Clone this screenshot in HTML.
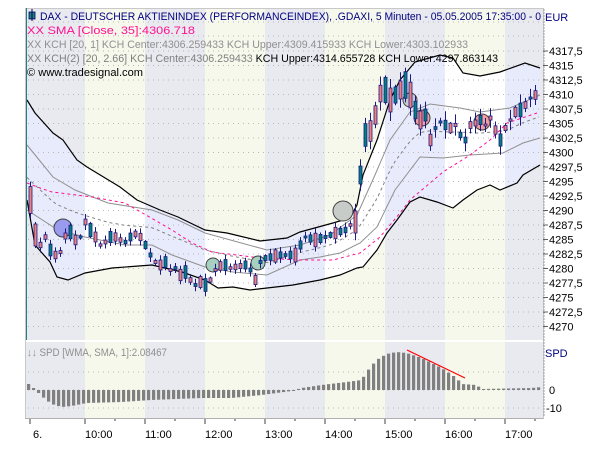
<!DOCTYPE html>
<html><head><meta charset="utf-8"><style>
body{margin:0;background:#fff;width:600px;height:450px;overflow:hidden;font-family:"Liberation Sans",sans-serif}
svg{position:absolute;left:0;top:0}
text{font-family:"Liberation Sans",sans-serif;font-size:11px}
</style></head><body>
<svg id="s" width="600" height="450" xmlns="http://www.w3.org/2000/svg"></svg>
<script>
var s=document.getElementById('s'),h='';
function interp(pts,x){if(x<=pts[0][0])return pts[0][1];for(var i=0;i<pts.length-1;i++){if(x<=pts[i+1][0]){var a=pts[i],b=pts[i+1];var t=(x-a[0])/(b[0]-a[0]);return a[1]+t*(b[1]-a[1]);}}return pts[pts.length-1][1];}
function pts2(p){return p.map(function(q){return q[0]+','+q[1]}).join(' ');}
function pl(p,st){return '<polyline fill="none" points="'+pts2(p)+'" '+st+'/>';}
var up=[[27,100],[35,113],[53,133],[63,140],[77,160],[87,167],[120,187],[137,200],[160,210],[178,217],[205,230],[227,233],[260,241],[287,238],[300,232],[333,223],[350,218],[357,205],[363,175],[377,140],[390,100],[400,80],[415,62],[440,55],[453,58],[463,73],[480,76],[500,72],[525,63],[540,68]];
var lo=[[27,200],[35,245],[50,262],[57,277],[68,280],[85,273],[112,268],[152,265],[182,272],[205,280],[218,288],[233,287],[250,290],[267,288],[293,285],[320,280],[340,275],[357,268],[363,267],[377,250],[387,233],[397,220],[410,202],[420,197],[437,202],[453,208],[463,200],[477,190],[490,185],[500,190],[517,183],[523,175],[540,165]];
var ui=[[27,145],[53,177],[75,190],[108,203],[152,210],[178,220],[205,233],[267,250],[300,245],[330,235],[357,215],[375,175],[390,140],[410,112],[430,104],[460,108],[480,112],[510,108],[540,95]];
var li=[[27,210],[58,230],[85,237],[125,245],[152,245],[172,255],[205,267],[233,272],[267,275],[300,260],[320,257],[340,253],[360,243],[377,227],[395,190],[420,157],[443,158],[470,155],[503,153],[523,143],[540,138]];
var sma=[[27,183],[40,188],[52,192],[92,197],[125,203],[172,230],[192,243],[212,252],[260,258],[300,260],[333,260],[360,253],[380,237],[400,213],[410,200],[443,172],[470,155],[490,140],[507,123],[537,113]];
var ce=[];for(var x=27;x<=540;x+=4)ce.push([x,(interp(ui,x)+interp(li,x))/2]);
h+='<defs><clipPath id="ch"><polygon points="'+pts2(up.concat(lo.slice().reverse()))+'"/></clipPath></defs>';
var cols=['#e9e9f0','#f6f8ec'],cc=['#e8ebfb','#ffffff'];
for(var i=0;i<9;i++){var x0=i==0?25:25+i*60;var x1=25+(i+1)*60;if(x1>543)x1=543;
h+='<rect x="'+x0+'" y="8" width="'+(x1-x0)+'" height="410" fill="'+cols[i%2]+'"/>';
h+='<rect x="'+x0+'" y="8" width="'+(x1-x0)+'" height="332" fill="'+cc[i%2]+'" clip-path="url(#ch)"/>';}
for(var i=0;i<20;i++){var y=51+i*14.5;h+='<line x1="28" y1="'+y+'" x2="543" y2="'+y+'" stroke="#b8b8b8" stroke-dasharray="1,4"/>';}
[22,36,372,390,408].forEach(function(y){h+='<line x1="28" y1="'+y+'" x2="543" y2="'+y+'" stroke="#b8b8b8" stroke-dasharray="1,4"/>';});
h+=pl(ui,'stroke="#909090"')+pl(li,'stroke="#909090"')+pl(ce,'stroke="#808080" stroke-dasharray="3,3"');
h+=pl(sma,'stroke="#ff1090" stroke-dasharray="3,3"');
h+=pl(up,'stroke="#000" stroke-width="1.2"')+pl(lo,'stroke="#000" stroke-width="1.2"');
[[63,228,9,'#9a9aee'],[213,265,7,'#a8d0c0'],[258,263,7,'#a8d0c0'],[343,211,10,'#c8ccc8'],[410,100,7,'#c8ccd0'],[422,118,8,'#f0a0a0'],[482,122,8,'#f0a0a0']].forEach(function(c){h+='<circle cx="'+c[0]+'" cy="'+c[1]+'" r="'+c[2]+'" fill="'+c[3]+'" stroke="#404040"/>';});
var mid=[[30,200],[35,235],[40,245],[45,237],[50,250],[55,255],[60,252],[65,236],[70,232],[75,240],[80,237],[85,222],[90,230],[95,237],[100,245],[105,242],[110,237],[115,237],[120,240],[125,242],[130,237],[135,234],[140,237],[145,245],[150,255],[155,262],[160,265],[165,262],[170,270],[175,268],[180,275],[185,272],[190,280],[195,285],[200,282],[205,285],[210,280],[215,270],[220,266],[225,265],[230,268],[240,266],[245,265],[250,270],[255,280],[260,262],[265,258],[270,257],[280,255],[295,255],[300,245],[305,237],[315,240],[325,237],[335,233],[345,230],[350,225],[355,222],[358,200],[362,150],[367,125],[372,135],[378,95],[385,90],[390,100],[395,95],[400,90],[405,85],[410,95],[415,110],[420,120],[425,115],[430,140],[435,128],[440,122],[445,125],[450,128],[455,125],[460,135],[465,140],[470,125],[475,123],[480,120],[485,125],[490,118],[495,130],[500,140],[505,128],[510,120],[515,112],[520,110],[525,105],[530,98],[535,95],[538,100]];
var k=0;for(var x=30;x<=538;x+=5){k++;var m=interp(mid,x);var n=Math.sin(k*2.3)*Math.cos(k*0.7);var bh=2+Math.abs(n)*12+((x>=355&&x<=420)?14:0)+((x==30||x==35)?18:0);var upc=n>0;if(x==30||x==35)upc=false;var yt=m-bh/2;var wick=1+Math.abs(Math.sin(k*1.7))*(x>350?8:4);
h+='<line x1="'+(x+0.5)+'" y1="'+(yt-wick)+'" x2="'+(x+0.5)+'" y2="'+(yt+bh+wick)+'" stroke="#1a1a80"/>';
h+='<rect x="'+(x-1)+'" y="'+yt+'" width="3" height="'+bh+'" fill="'+(upc?'#008080':'#f08080')+'" stroke="#1a1a80" stroke-width="0.8"/>';}
h+='<line x1="25" y1="341" x2="543" y2="341" stroke="#fff" stroke-width="2"/>';
var hv=[[27,6],[32,2],[40,-6],[50,-14],[60,-17],[70,-16],[85,-13],[120,-12],[150,-10],[200,-8],[230,-8],[260,-5],[290,-1],[300,2],[320,5],[345,8],[360,10],[365,18],[375,30],[385,36],[395,38],[405,37],[420,32],[440,22],[455,12],[460,6],[475,5],[480,1],[530,2],[540,3]];
for(var x=27;x<=540;x+=5){var v=interp(hv,x);var y=v>0?390-v:390;h+='<rect x="'+x+'" y="'+y+'" width="3.2" height="'+Math.max(1,Math.abs(v))+'" fill="#808080"/>';}
h+='<line x1="407" y1="350" x2="465" y2="378" stroke="#ff0000" stroke-width="1.2"/>';
h+='<rect x="25.5" y="8.5" width="518" height="410" fill="none" stroke="#c8c8c8"/>';
h+='<line x1="26.5" y1="8" x2="26.5" y2="340" stroke="#208080"/>';
h+='<line x1="25" y1="418.5" x2="543" y2="418.5" stroke="#b0b0b0"/>';
for(var y=10;y<418;y+=3){h+='<line x1="543" y1="'+y+'" x2="545" y2="'+y+'" stroke="#a0a0a0"/>';}
var labs=['4317,5','4315','4312,5','4310','4307,5','4305','4302,5','4300','4297,5','4295','4292,5','4290','4287,5','4285','4282,5','4280','4277,5','4275','4272,5','4270'];
labs.forEach(function(l,i){var y=51+i*14.5;h+='<line x1="543" y1="'+y+'" x2="548" y2="'+y+'" stroke="#606060"/><text x="549" y="'+(y+4)+'" fill="#000">'+l+'</text>';});
h+='<text x="545" y="21" fill="#000080">EUR</text><text x="545" y="357" fill="#000080">SPD</text>';
h+='<text x="549" y="394">0</text><text x="546" y="412">-10</text>';
var t=['10:00','11:00','12:00','13:00','14:00','15:00','16:00','17:00'];
for(var i=0;i<8;i++){var x=85+i*60;h+='<line x1="'+x+'" y1="419" x2="'+x+'" y2="424" stroke="#404040"/><line x1="'+(x+30)+'" y1="419" x2="'+(x+30)+'" y2="421" stroke="#404040"/><text x="'+x+'" y="438">'+t[i]+'</text>';}
h+='<line x1="30" y1="419" x2="30" y2="424" stroke="#404040"/><text x="33" y="438">6.</text>';
h+='<rect x="29" y="12" width="6" height="7" fill="#208080" stroke="#000060" stroke-width="0.8"/><line x1="32" y1="9" x2="32" y2="21" stroke="#000060"/>';
h+='<text x="40" y="20" fill="#000080" textLength="501" lengthAdjust="spacingAndGlyphs">DAX  - DEUTSCHER AKTIENINDEX (PERFORMANCEINDEX), .GDAXI, 5 Minuten - 05.05.2005 17:35:00 - 0</text>';
h+='<text x="27" y="34" fill="#ff1090" textLength="168" lengthAdjust="spacingAndGlyphs">XX SMA [Close, 35]:4306.718</text>';
h+='<text x="27" y="48" fill="#909090" textLength="441" lengthAdjust="spacingAndGlyphs">XX KCH [20, 1] KCH Center:4306.259433 KCH Upper:4309.415933 KCH Lower:4303.102933</text>';
h+='<text x="27" y="62" fill="#808080" textLength="471" lengthAdjust="spacingAndGlyphs">XX KCH(2) [20, 2.66] KCH Center:4306.259433 <tspan fill="#000">KCH Upper:4314.655728 KCH Lower:4297.863143</tspan></text>';
h+='<text x="27" y="76" fill="#000" textLength="116" lengthAdjust="spacingAndGlyphs">© www.tradesignal.com</text>';
h+='<text x="27" y="356" fill="#909090" textLength="140" lengthAdjust="spacingAndGlyphs">↓↓ SPD [WMA, SMA, 1]:2.08467</text>';
s.innerHTML=h;
</script>
</body></html>
